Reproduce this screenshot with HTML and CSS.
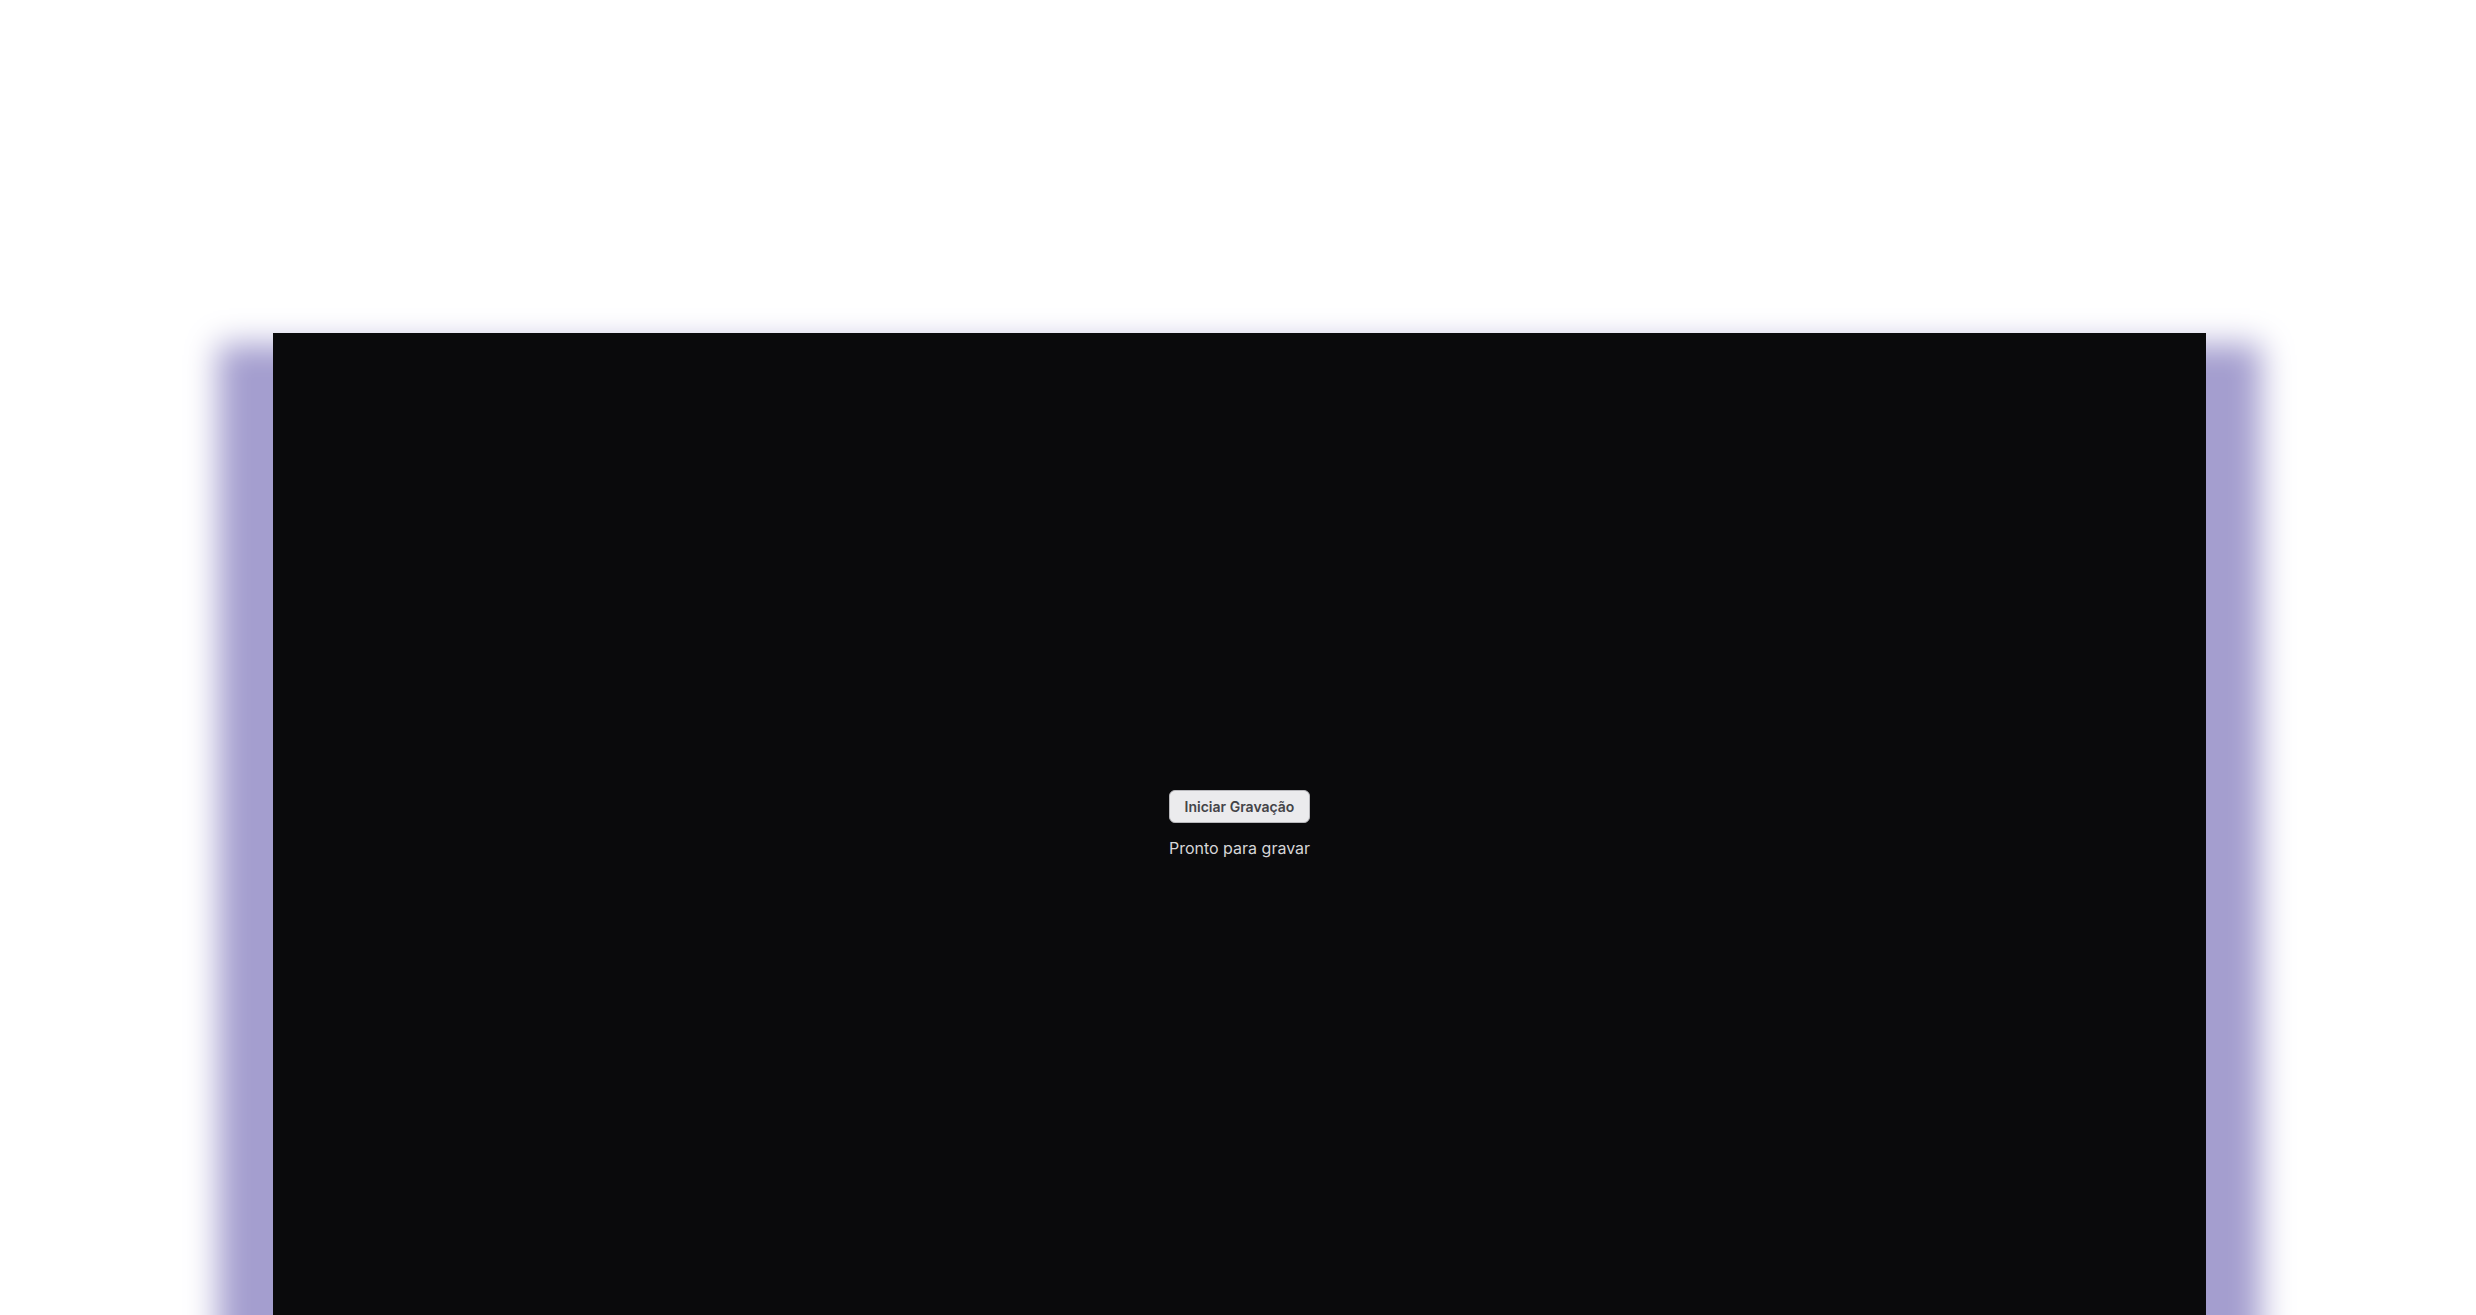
FILE: index.html
```html
<!DOCTYPE html>
<html lang="pt">
<head>
<meta charset="utf-8">
<title>Gravação</title>
<link rel="stylesheet" href="styles.css">
</head>
<body>
<main class="stage">
  <section class="panel">
    <button class="record-btn" type="button">Iniciar Gravação</button>
    <p class="status">Pronto para gravar</p>
  </section>
</main>
</body>
</html>
```

FILE: styles.css
```css
html, body {
  margin: 0;
  padding: 0;
  background: #ffffff;
  overflow: hidden;
}
.stage {
  padding: 333px 270px 0 273px;
  height: 1315px;
  box-sizing: border-box;
}
.panel {
  height: 982px;
  background: #0a0a0c;
  box-shadow: 0 66px 30px 55px #a49ecf;
  display: flex;
  flex-direction: column;
  align-items: center;
  justify-content: center;
  font-family: Inter, "Noto Sans", sans-serif;
}
.record-btn {
  font-family: Inter, "Noto Sans", sans-serif;
  font-size: 14px;
  font-weight: 600;
  line-height: 17px;
  color: #444448;
  background: #ebebed;
  border: 1px solid #b8b8bc;
  border-radius: 6px;
  padding: 7px 10px;
  width: 141px;
  height: 33px;
  box-sizing: border-box;
  margin: 0;
}
.status {
  margin: 15px 0 0;
  font-size: 16px;
  line-height: 20px;
  color: #d6d6d8;
}
```
